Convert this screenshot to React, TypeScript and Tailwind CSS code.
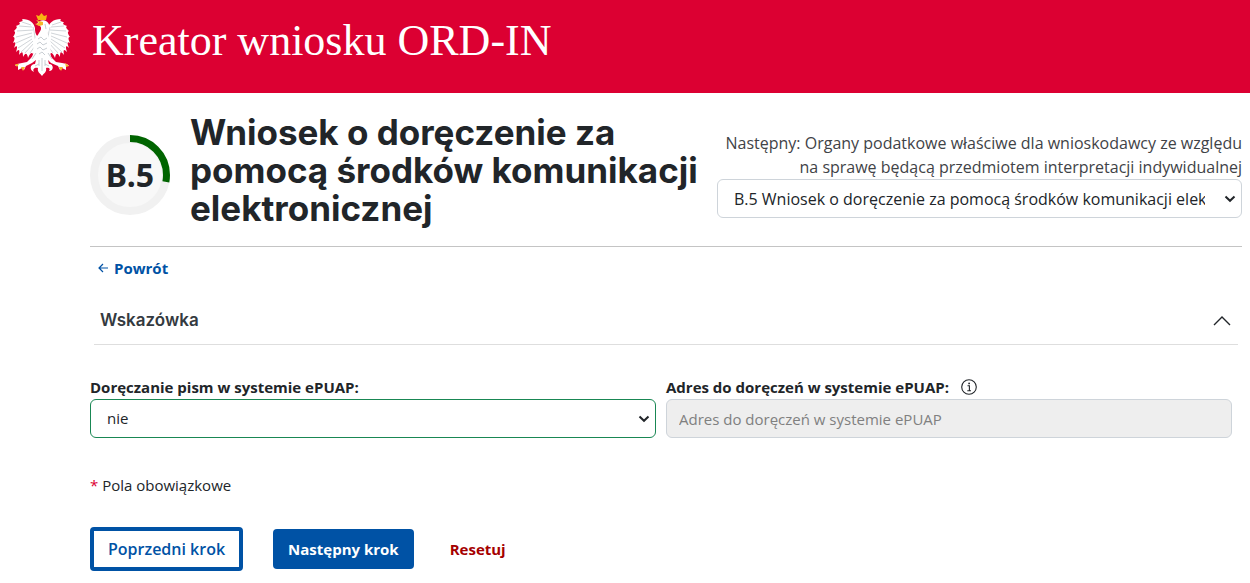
import { useState } from 'react'

const steps = [
  'B.5 Wniosek o doręczenie za pomocą środków komunikacji elektronicznej',
  'C. Organy podatkowe właściwe dla wnioskodawcy',
]

const Eagle = () => (
  <svg viewBox="0 0 60 64" className="h-16 w-[60px] shrink-0" role="img" aria-label="Godło">
    <g id="wing">
      <path
        d="M26 25C23 22 23 19 23 16C22 11 18 7 10 7C12 9 9 10 7 10C9 12 7 13 4 14C6 15 4 17 2 19C4 20 3 22 1 25C3 25 3 27 1 31C4 29 4 31 2 36C5 33 6 34 4 40C7 37 8 37 7 43C10 39 11 39 11 45C13 41 15 40 16 46C18 41 20 40 21 42C23 38 27 36 29 36V24Z"
        fill="#fff"
      />
      <path
        d="M19 13L10 10M20 15L7 14M21 18L5 19M20 21L4 25M20 24L4 31M20 27L6 36M21 29L9 40M22 31L13 41M23 34L18 41M21 15C23 20 22 27 25 31"
        stroke="#cbcfd4"
        strokeWidth="0.9"
        fill="none"
      />
    </g>
    <use href="#wing" transform="translate(59 0) scale(-1 1)" />
    <path
      d="M25 12C26 9 31 7 34 9C38 11 38 16 36 20C35 24 39 27 39 32C39 37 37 41 40 46L44 50L50 51L55 52L57 54L54 54L54 58L50 56L48 58L46 54L39 51L36 48L37 52C42 52 42 59 37 59C39 56 36 55 34 56C35 60 32 61 30 64C28 61 25 60 26 56C23 55 20 57 22 60C17 58 18 52 23 52L24 48L20 51L14 54L12 58L10 56L6 58L6 54L3 54L5 52L10 51L15 50L19 46C23 41 21 36 21 32C21 27 25 25 27 21C29 18 30 16 28 14Z"
      fill="#fff"
    />
    <path
      d="M26 27L29 25L32 28L35 26M25 32L28 30L31 33L35 31M25 37L28 35L31 38L35 36M27 42L30 40L33 43M24 41L20 47M36 41L40 47M27 48V54M30 46V59M33 48V54M23 54L27 52M37 54L33 52M33 12L34 17"
      stroke="#c3c8ce"
      strokeWidth="0.9"
      fill="none"
    />
    <path d="M26 8L24 3L27 4L29.5 1L32 4L35 3L34 8Z" fill="#f7b512" />
    <path
      d="M31 10L24 8L27 11L23 12L27 14L31 13ZM3 52L7 52L5 55ZM9 55L13 55L11 59ZM53 51L57 54L54 55ZM47 55L51 55L49 59Z"
      fill="#f5b72a"
    />
  </svg>
)

const StepProgress = () => (
  <div className="relative flex size-20 shrink-0 items-center justify-center">
    <svg viewBox="0 0 80 80" className="absolute inset-0">
      <circle cx="40" cy="40" r="36" fill="#f8f8f8" stroke="#f1f1f1" strokeWidth="8" />
      <circle
        cx="40"
        cy="40"
        r="36.5"
        fill="none"
        stroke="#006400"
        strokeWidth="7"
        pathLength="100"
        strokeDasharray="28 72"
        transform="rotate(-90 40 40)"
      />
    </svg>
    <span className="relative font-['Noto_Sans',sans-serif] text-[32px] font-bold">B.5</span>
  </div>
)

const Chevron = () => (
  <svg viewBox="0 0 12 8" className="pointer-events-none absolute top-4 right-[6px] h-2 w-3">
    <path d="M1.5 1.5L6 5.8L10.5 1.5" fill="none" stroke="#212529" strokeWidth="2" />
  </svg>
)

const App = () => {
  const [step, setStep] = useState(steps[0])
  const [delivery, setDelivery] = useState('nie')
  const [hintOpen, setHintOpen] = useState(true)

  return (
    <div className="min-h-screen bg-white pb-3 font-['Open_Sans',sans-serif] text-base text-[#212529]">
      <header className="flex h-[93px] items-start gap-5 bg-[#dc0032] px-3 pt-3">
        <Eagle />
        <span className="font-['Liberation_Serif',serif] text-[44px] leading-[58px] text-white">
          Kreator wniosku ORD-IN
        </span>
      </header>

      <main className="pr-2 pl-[90px]">
        <div className="flex items-center border-b border-[#c4c4c4] pt-5 pb-[10px]">
          <StepProgress />
          <h1 className="ml-5 min-w-0 flex-1 pr-3 pb-[9px] font-['Inter',sans-serif] text-[35px] leading-[38px] font-bold">
            Wniosek o doręczenie za pomocą środków komunikacji elektronicznej
          </h1>
          <div className="w-[525px] shrink-0">
            <p className="text-right leading-6 text-[#3f4347]">
              Następny: Organy podatkowe właściwe dla wnioskodawcy ze względu na sprawę będącą
              przedmiotem interpretacji indywidualnej
            </p>
            <div className="relative">
              <select
                aria-label="Krok"
                value={step}
                onChange={e => setStep(e.target.value)}
                className="h-[39px] w-full appearance-none rounded-md border border-[#ced4da] bg-white pr-9 pl-4"
              >
                {steps.map(s => (
                  <option key={s}>{s}</option>
                ))}
              </select>
              <Chevron />
            </div>
          </div>
        </div>

        <a
          href="#powrot"
          className="mt-[7px] ml-2 inline-flex items-center gap-[6px] text-[15px] leading-7 font-bold text-[#0052a5]"
        >
          <svg viewBox="0 0 10 10" className="size-[10px]">
            <path d="M10 5H1M5 1L1 5L5 9" fill="none" stroke="currentColor" strokeWidth="1.2" />
          </svg>
          Powrót
        </a>

        <button
          type="button"
          aria-expanded={hintOpen}
          onClick={() => setHintOpen(!hintOpen)}
          className="mx-1 mt-[13px] flex h-[50px] w-[calc(100%-8px)] items-center justify-between border-b border-[#dedede] px-[6px] pt-[2px] font-['Inter',sans-serif] text-[17px] font-semibold text-[#343a40]"
        >
          Wskazówka
          <svg viewBox="0 0 20 12" className="h-3 w-5">
            <path d="M2 10L10 2L18 10" fill="none" stroke="#212529" strokeWidth="1.4" />
          </svg>
        </button>

        <form className="mt-[30px]" onSubmit={e => e.preventDefault()}>
          <div className="grid grid-cols-2 gap-[10px] pr-[10px]">
            <div>
              <label htmlFor="delivery" className="flex h-6 items-center text-[15px] font-bold">
                Doręczanie pism w systemie ePUAP:
              </label>
              <div className="relative">
                <select
                  id="delivery"
                  value={delivery}
                  onChange={e => setDelivery(e.target.value)}
                  className="h-[39px] w-full appearance-none rounded-md border border-[#198754] bg-white pr-8 pl-4 text-[15px]"
                >
                  <option>nie</option>
                  <option>tak</option>
                </select>
                <Chevron />
              </div>
            </div>
            <div>
              <div className="flex h-6 items-center gap-3">
                <label htmlFor="address" className="text-[15px] font-bold">
                  Adres do doręczeń w systemie ePUAP:
                </label>
                <button type="button" aria-label="Informacja">
                  <svg viewBox="0 0 16 16" className="size-4">
                    <circle cx="8" cy="8" r="7.3" fill="none" stroke="#212529" strokeWidth="1.1" />
                    <path d="M6.5 6.8H8.4V11.5M6.3 11.7H10" fill="none" stroke="#212529" strokeWidth="1.1" />
                    <circle cx="8.1" cy="4.4" r="0.9" fill="#212529" />
                  </svg>
                </button>
              </div>
              <input
                id="address"
                type="text"
                disabled
                placeholder="Adres do doręczeń w systemie ePUAP"
                className="h-[39px] w-full rounded-md border border-[#ced4da] bg-[#eeeeee] px-3 text-[15px] placeholder:text-[#808080]"
              />
            </div>
          </div>

          <p className="mt-[35px] text-[15px] leading-6">
            <span className="text-[#dc0032]">*</span> Pola obowiązkowe
          </p>

          <div className="mt-[30px] flex items-center">
            <button
              type="button"
              className="h-11 rounded border-4 border-[#0052a5] px-[14px] font-semibold text-[#0052a5]"
            >
              Poprzedni krok
            </button>
            <button
              type="submit"
              className="ml-[30px] h-10 rounded bg-[#0052a5] px-[15px] text-[15px] font-bold text-white"
            >
              Następny krok
            </button>
            <button type="reset" className="ml-9 text-[15px] font-bold text-[#a50000]">
              Resetuj
            </button>
          </div>
        </form>
      </main>
    </div>
  )
}

export default App
